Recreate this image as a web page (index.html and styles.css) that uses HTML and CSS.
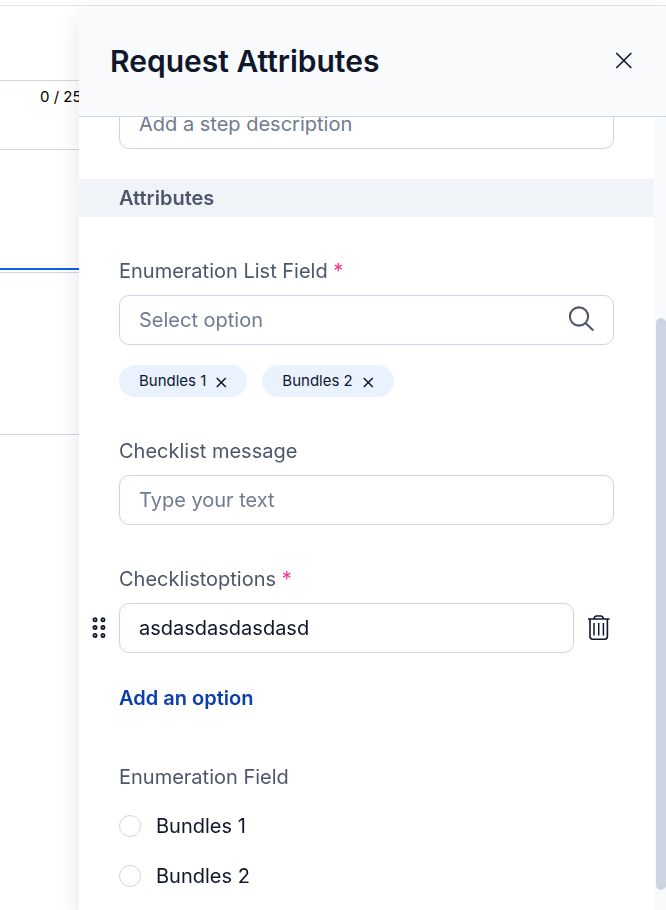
FILE: index.html
```html
<!DOCTYPE html>
<html lang="en">
<head>
<meta charset="utf-8">
<meta name="viewport" content="width=device-width, initial-scale=1">
<title>Request Attributes</title>
<link rel="stylesheet" href="styles.css">
</head>
<body>
<main class="page">
  <div class="page-field"></div>
  <div class="page-counter"><span>0 / 255</span></div>
  <div class="page-tabs"></div>
  <div class="page-section"></div>
</main>

<aside class="drawer">
  <header class="drawer-header">
    <h1>Request Attributes</h1>
    <button class="icon-button" type="button" aria-label="Close">
      <svg width="18" height="18" viewBox="0 0 18 18" fill="none" stroke="currentColor" stroke-width="1.6"><path d="M1.3 1l15 15M16.3 1l-15 15"/></svg>
    </button>
  </header>
  <div class="drawer-body">
    <form class="form">
      <input class="input description" type="text" placeholder="Add a step description" aria-label="Step description">
      <h2 class="section-title">Attributes</h2>

      <div class="field">
        <label for="enum-list">Enumeration List Field <span class="required">*</span></label>
        <div class="input search">
          <input id="enum-list" type="text" placeholder="Select option">
          <svg width="28" height="28" viewBox="0 0 28 28" fill="none" stroke="currentColor" stroke-width="2.1"><circle cx="11" cy="10.5" r="9.1"/><path d="M17.5 17l7.8 7.6"/></svg>
        </div>
        <div class="chips">
          <span class="chip">Bundles 1
            <button class="icon-button" type="button" aria-label="Remove Bundles 1"><svg width="12" height="12" viewBox="0 0 12 12" fill="none" stroke="currentColor" stroke-width="1.5"><path d="M1.8 1l9 9M10.8 1l-9 9"/></svg></button>
          </span>
          <span class="chip">Bundles 2
            <button class="icon-button" type="button" aria-label="Remove Bundles 2"><svg width="12" height="12" viewBox="0 0 12 12" fill="none" stroke="currentColor" stroke-width="1.5"><path d="M1.8 1l9 9M10.8 1l-9 9"/></svg></button>
          </span>
        </div>
      </div>

      <div class="field">
        <label for="message">Checklist message</label>
        <input class="input" id="message" type="text" placeholder="Type your text">
      </div>

      <div class="field">
        <label for="option">Checklistoptions <span class="required">*</span></label>
        <div class="option-row">
          <button class="icon-button drag" type="button" aria-label="Reorder option">
            <svg width="14" height="22" viewBox="0 0 14 22" fill="none" stroke="currentColor" stroke-width="1.8"><circle cx="3" cy="2.8" r="1.6"/><circle cx="11" cy="2.8" r="1.6"/><circle cx="3" cy="10.6" r="1.6"/><circle cx="11" cy="10.6" r="1.6"/><circle cx="3" cy="18.4" r="1.6"/><circle cx="11" cy="18.4" r="1.6"/></svg>
          </button>
          <input class="input" id="option" type="text" value="asdasdasdasdasd">
          <button class="icon-button" type="button" aria-label="Delete option">
            <svg width="22" height="26" viewBox="0 0 22 26" fill="none" stroke="currentColor" stroke-width="1.6"><path d="M0 4h21.6M6 3.9c.3-2 1.2-2.9 2.6-2.9h4.2c1.4 0 2.3.9 2.6 2.9M2 4.2v17.4c0 1.6 1 2.6 2.6 2.6h12.2c1.6 0 2.6-1 2.6-2.6V4.2"/><path stroke-width="1.5" d="M6 8v12.4M10.7 8v12.4M15.4 8v12.4"/></svg>
          </button>
        </div>
        <button class="add-option" type="button">Add an option</button>
      </div>

      <fieldset class="choices">
        <legend>Enumeration Field</legend>
        <label><input type="radio" name="bundle">Bundles 1</label>
        <label><input type="radio" name="bundle">Bundles 2</label>
      </fieldset>
    </form>
    <div class="scroll-track">
      <div class="scroll-thumb"></div>
    </div>
  </div>
</aside>
</body>
</html>
```
FILE: styles.css
```css
* {
  box-sizing: border-box;
}

body {
  margin: 0;
  height: 100vh;
  overflow: hidden;
  background: #fff;
  color: #0f172a;
  font-family: Inter, sans-serif;
  font-size: 20px;
  line-height: 24px;
}

button,
input {
  font: inherit;
  color: inherit;
}

/* Page behind the drawer */
.page {
  margin-top: 5px;
  border-top: 1px solid #e2e5ea;
}

.page-field {
  height: 75px;
  border-bottom: 1px solid #cdd4e2;
}

.page-counter {
  height: 69px;
  padding: 4px 0 0 40px;
  border-bottom: 1px solid #cdd4e2;
  color: #000;
  font-size: 15px;
}

.page-tabs {
  height: 120px;
  border-bottom: 2px solid #0b63e5;
}

.page-section {
  height: 163px;
  margin-top: 2px;
  border: solid #cdd4e2;
  border-width: 1px 0;
}

/* Drawer */
.drawer {
  position: fixed;
  inset: 6px 0 0 79px;
  display: flex;
  flex-direction: column;
  background: #fff;
  box-shadow: 0 12px 24px rgba(0, 0, 0, 0.1);
}

.drawer-header {
  flex: none;
  display: flex;
  align-items: center;
  justify-content: space-between;
  height: 111px;
  padding: 0 33px 0 31px;
  background: #f8fafc;
  border-bottom: 1px solid #cbd5e1;
}

h1 {
  margin: 0;
  font-size: 30px;
  font-weight: 600;
  line-height: 36px;
}

.icon-button {
  display: flex;
  flex: none;
  padding: 0;
  border: 0;
  background: none;
  cursor: pointer;
}

.drawer-body {
  display: flex;
  flex: 1;
  min-height: 0;
  overflow: hidden;
}

.form {
  flex: 1;
  min-width: 0;
  margin-top: -18px;
}

.input {
  display: block;
  width: 100%;
  height: 50px;
  padding: 0 19px;
  border: 1px solid #cfd5e2;
  border-radius: 10px;
  background: #fff;
}

.input::placeholder,
.search input::placeholder {
  color: #717b90;
  opacity: 1;
}

.description {
  width: calc(100% - 80px);
  margin: 0 40px;
}

.section-title {
  margin: 30px 0 0;
  padding: 7px 40px;
  background: #f0f3f8;
  color: #4d566b;
  font-size: 20px;
  font-weight: 600;
}

.field {
  margin: 42px 40px 0;
}

.field > label {
  display: block;
  margin-bottom: 12px;
  color: #4d566b;
}

.required {
  color: #f72f8e;
}

.search {
  display: flex;
  align-items: center;
  padding-right: 17px;
  color: #4d566b;
}

.search input {
  flex: 1;
  min-width: 0;
  padding: 0;
  border: 0;
  outline: 0;
  background: none;
}

.chips {
  display: flex;
  gap: 15px;
  margin-top: 20px;
}

.chip {
  display: flex;
  align-items: center;
  gap: 9px;
  height: 32px;
  padding: 0 20px;
  border-radius: 16px;
  background: #eaf2ff;
  font-size: 15px;
}

.chip .icon-button {
  padding-top: 3px;
}

.option-row {
  display: flex;
  align-items: center;
  gap: 14px;
  margin: 0 4px 0 -27px;
}

.option-row .input {
  flex: 1;
  min-width: 0;
}

.drag {
  margin-right: -1px;
}

.add-option {
  display: block;
  margin-top: 33px;
  padding: 0;
  border: 0;
  background: none;
  color: #0b3fae;
  font-weight: 600;
  cursor: pointer;
}

.choices {
  margin: 55px 40px 0;
  padding: 0;
  border: 0;
}

.choices legend {
  margin-bottom: 25px;
  padding: 0;
  color: #4d566b;
}

.choices label {
  display: flex;
  align-items: center;
  gap: 15px;
  margin-bottom: 26px;
}

.choices input {
  appearance: none;
  width: 22px;
  height: 22px;
  margin: 0;
  border: 1px solid #cfd5e5;
  border-radius: 50%;
}

.choices input:checked {
  border: 6px solid #0b63e5;
}

/* Scroll bar */
.scroll-track {
  flex: none;
  width: 12px;
  padding-left: 2px;
  border-radius: 6px 0 0 0;
  background: #f8fafc;
  display: grid;
  grid-template-rows: 201fr 572fr 20fr;
}

.scroll-thumb {
  grid-row: 2;
  border-radius: 5px;
  background: #cdd4e1;
}
```
